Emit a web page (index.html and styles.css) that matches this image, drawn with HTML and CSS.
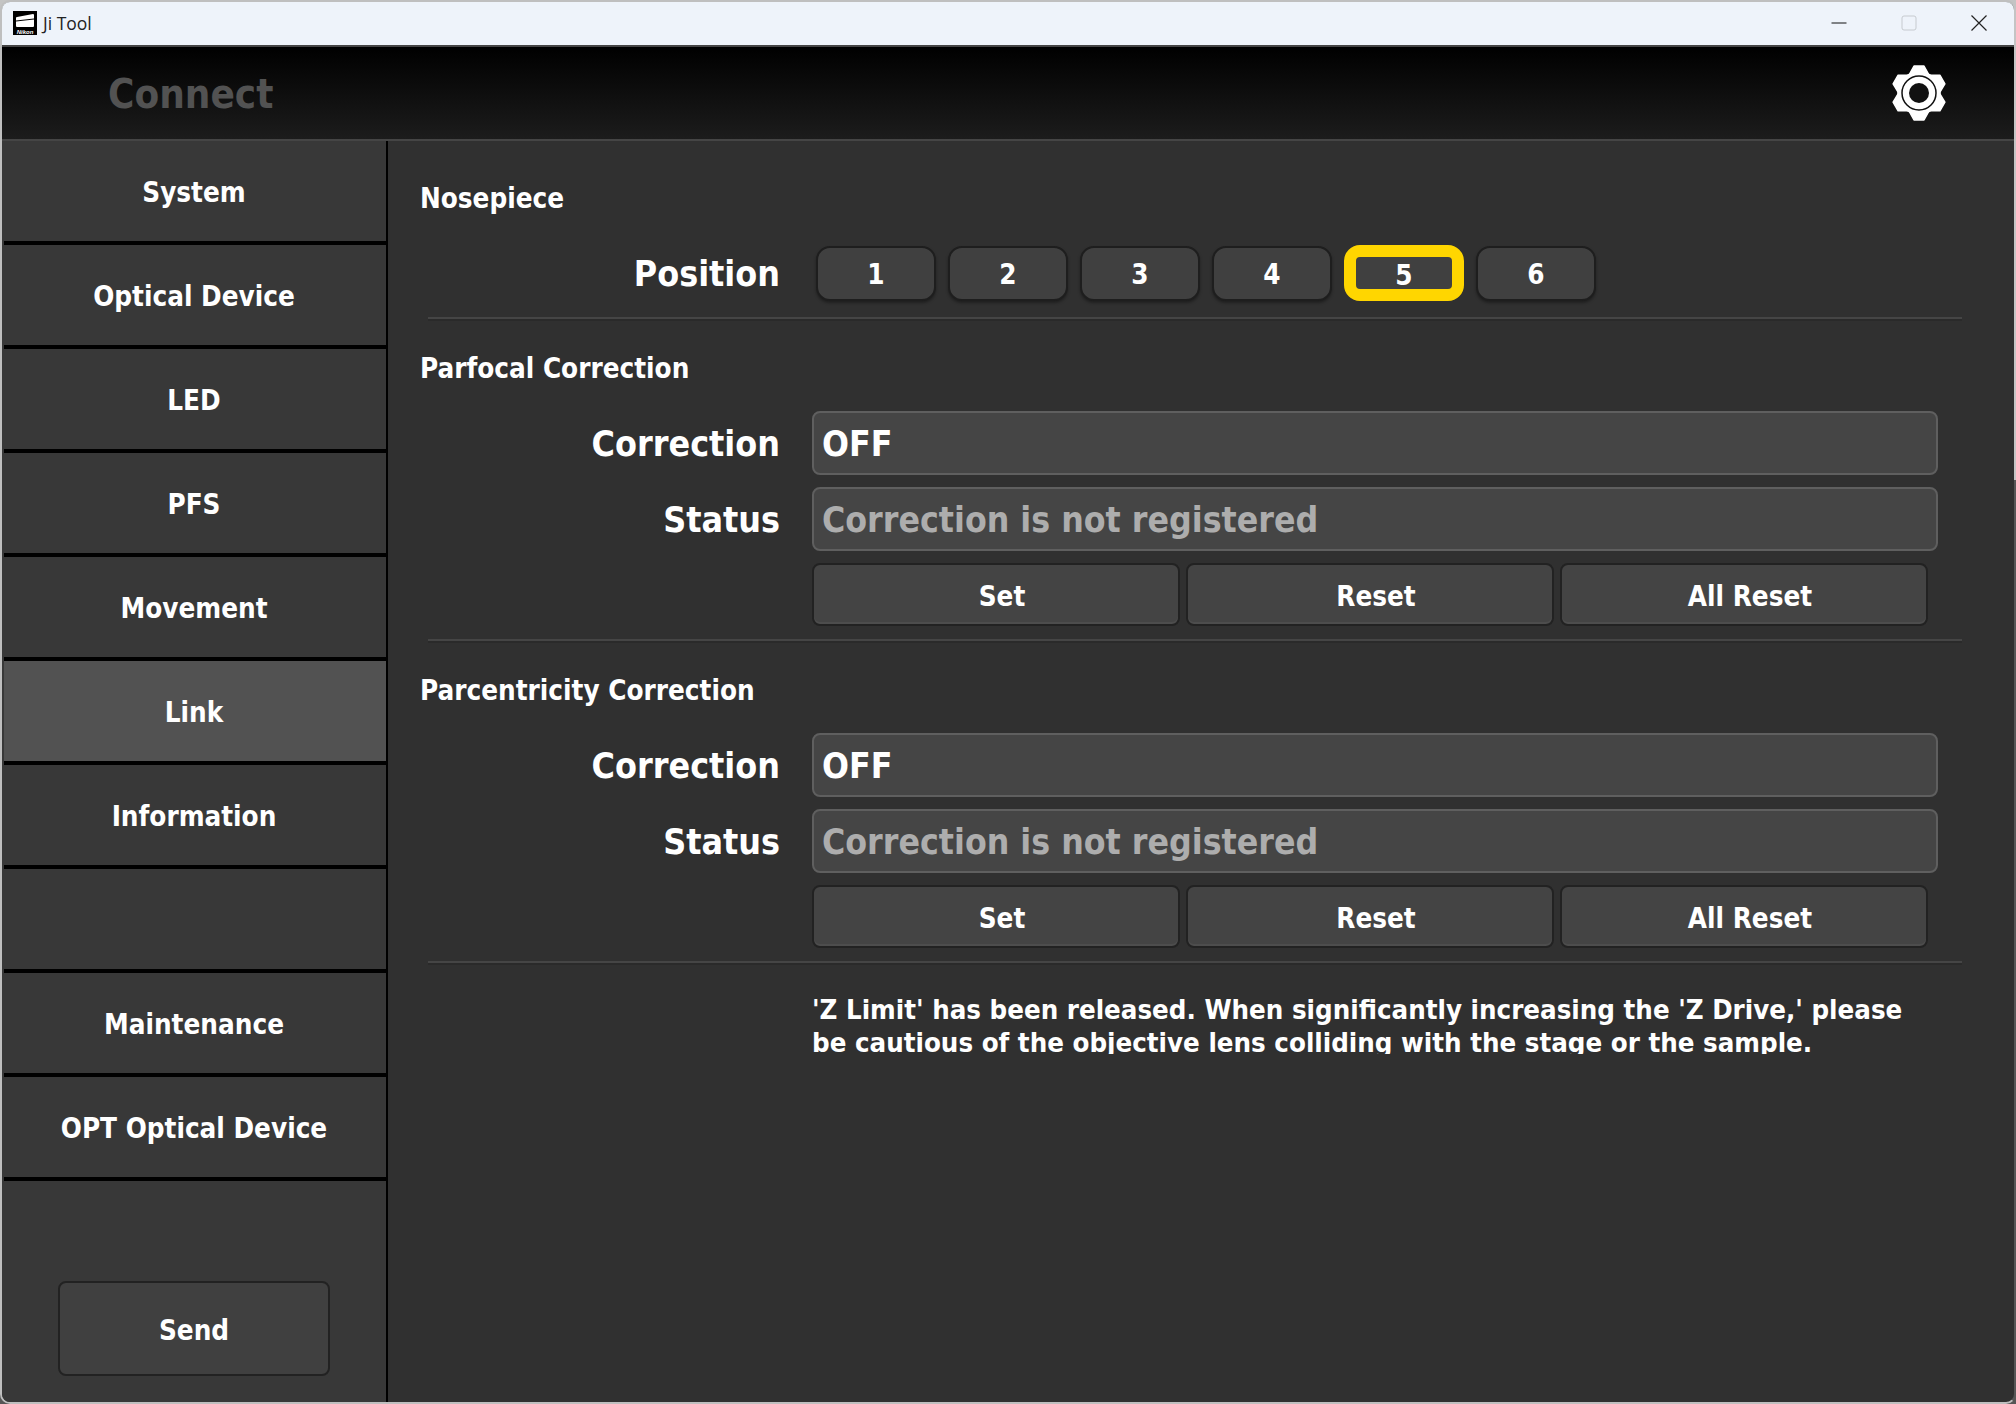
FILE: index.html
```html
<!DOCTYPE html>
<html lang="en">

<head>
    <meta charset="UTF-8">
    <title>Ji Tool</title>
    <link rel="stylesheet" href="styles.css">
</head>

<body>

    <div class="window">
        <div class="titlebar">
            <svg class="app-icon" width="24" height="24" viewBox="0 0 24 24">
                <rect width="24" height="24" fill="#000" />
                <path d="M4 6 L20 3 Q21 3 21 4 L21 15 Q21 16 20 16 L4 16 Q3 16 3 15 L3 7 Q3 6 4 6 Z" fill="#fff" />
                <path d="M3 10 L21 8" stroke="#000" stroke-width="1" />
                <text x="12" y="23" class="app-icon-text" text-anchor="middle">Nikon</text>
            </svg>
            <span class="app-name">Ji Tool</span>
            <div class="win-buttons">
                <svg width="16" height="16" viewBox="0 0 16 16">
                    <path d="M0.5 8 H15.5" stroke="#111" stroke-width="1" />
                </svg>
                <svg width="16" height="16" viewBox="0 0 16 16">
                    <rect x="1" y="1" width="14" height="14" rx="2" fill="none" stroke="#c6cacf" stroke-width="1" />
                </svg>
                <svg width="16" height="16" viewBox="0 0 16 16">
                    <path d="M0.5 0.5 L15.5 15.5 M15.5 0.5 L0.5 15.5" stroke="#222" stroke-width="1.2" />
                </svg>
            </div>
        </div>

        <header class="topbar">
            <span class="connect">Connect</span>
            <svg class="gear" width="56" height="58" viewBox="-28 -29 56 58">
                <g fill="#fff" stroke="#fff" stroke-width="1.5" stroke-linejoin="round">
                    <circle r="21" />
                    <path d="M-10 -18 L-5 -27 L5 -27 L10 -18 Z" />
                    <path d="M-10 -18 L-5 -27 L5 -27 L10 -18 Z" transform="rotate(60)" />
                    <path d="M-10 -18 L-5 -27 L5 -27 L10 -18 Z" transform="rotate(120)" />
                    <path d="M-10 -18 L-5 -27 L5 -27 L10 -18 Z" transform="rotate(180)" />
                    <path d="M-10 -18 L-5 -27 L5 -27 L10 -18 Z" transform="rotate(240)" />
                    <path d="M-10 -18 L-5 -27 L5 -27 L10 -18 Z" transform="rotate(300)" />
                </g>
                <circle r="17" fill="none" stroke="#111" stroke-width="1.5" />
                <circle r="10" fill="#111" />
            </svg>
        </header>

        <div class="content">
            <nav class="sidebar">
                <div class="nav-item">System</div>
                <div class="nav-item">Optical Device</div>
                <div class="nav-item">LED</div>
                <div class="nav-item">PFS</div>
                <div class="nav-item">Movement</div>
                <div class="nav-item active">Link</div>
                <div class="nav-item">Information</div>
                <div class="nav-item"></div>
                <div class="nav-item">Maintenance</div>
                <div class="nav-item">OPT Optical Device</div>
                <button class="send-btn">Send</button>
            </nav>

            <main class="main">
                <section class="section first">
                    <h3>Nosepiece</h3>
                    <div class="row position-row">
                        <span class="row-label">Position</span>
                        <div class="positions">
                            <button class="pos-btn">1</button>
                            <button class="pos-btn">2</button>
                            <button class="pos-btn">3</button>
                            <button class="pos-btn">4</button>
                            <button class="pos-btn selected">5</button>
                            <button class="pos-btn">6</button>
                        </div>
                    </div>
                </section>
                <div class="divider"></div>

                <section class="section">
                    <h3>Parfocal Correction</h3>
                    <div class="row field-row">
                        <span class="row-label">Correction</span>
                        <div class="field">OFF</div>
                    </div>
                    <div class="row field-row">
                        <span class="row-label">Status</span>
                        <div class="field muted">Correction is not registered</div>
                    </div>
                    <div class="actions">
                        <button class="act-btn">Set</button>
                        <button class="act-btn">Reset</button>
                        <button class="act-btn">All Reset</button>
                    </div>
                </section>
                <div class="divider"></div>

                <section class="section">
                    <h3>Parcentricity Correction</h3>
                    <div class="row field-row">
                        <span class="row-label">Correction</span>
                        <div class="field">OFF</div>
                    </div>
                    <div class="row field-row">
                        <span class="row-label">Status</span>
                        <div class="field muted">Correction is not registered</div>
                    </div>
                    <div class="actions">
                        <button class="act-btn">Set</button>
                        <button class="act-btn">Reset</button>
                        <button class="act-btn">All Reset</button>
                    </div>
                </section>
                <div class="divider"></div>

                <p class="notice">'Z Limit' has been released. When significantly increasing the 'Z Drive,' please be cautious of the objective lens colliding with the stage or the sample.</p>
            </main>
        </div>
    </div>

</body>

</html>
```

FILE: styles.css
```css
/* General Styles */
html,
body {
    margin: 0;
    height: 100%;
}

body {
    background: linear-gradient(#c4c4c4 480px, #565656 480px);
    overflow: hidden;
    font-family: "DejaVu Sans", "Liberation Sans", sans-serif;
    font-stretch: condensed;
    font-weight: 700;
    color: #fff;
}

button {
    font: inherit;
    font-stretch: condensed;
    color: #fff;
    padding: 0;
}

.window {
    width: 2016px;
    height: 1404px;
    box-sizing: border-box;
    border: 2px solid #bfbfbf;
    border-right-color: transparent;
    border-radius: 10px;
    background-clip: padding-box;
    overflow: hidden;
    background-color: #303030;
    display: flex;
    flex-direction: column;
}

/* Title Bar */
.titlebar {
    height: 41px;
    flex: none;
    display: flex;
    align-items: center;
    background: #eef3fa;
    border-bottom: 2px solid #444;
    padding: 0 0 2px 11px;
    font-family: "Open Sans", sans-serif;
    font-stretch: normal;
    font-weight: 400;
    color: #222;
}

.app-icon-text {
    font-family: "Liberation Sans", sans-serif;
    font-size: 6px;
    font-style: italic;
    font-weight: 700;
    fill: #fff;
}

.app-name {
    margin-left: 6px;
    font-size: 17.5px;
}

.win-buttons {
    margin-left: auto;
    display: flex;
    gap: 54px;
    padding-right: 27px;
}

/* Header */
.topbar {
    height: 92px;
    flex: none;
    display: flex;
    align-items: center;
    justify-content: space-between;
    background: linear-gradient(#000, #1c1c1c);
    border-bottom: 2px solid #454545;
    padding: 0 67px 0 106px;
}

.connect {
    font-size: 40px;
    padding-top: 2px;
    color: #525252;
}

.content {
    flex: 1;
    display: flex;
    min-height: 0;
}

/* Sidebar */
.sidebar {
    width: 382px;
    flex: none;
    padding-left: 2px;
    background: #383838;
    border-right: 2px solid #000;
}

.nav-item {
    height: 98px;
    padding: 2px 2px 0 0;
    border-bottom: 4px solid #000;
    display: flex;
    align-items: center;
    justify-content: center;
    font-size: 27.6px;
}

.nav-item.active {
    background: #525252;
}

.send-btn {
    display: block;
    width: 272px;
    height: 95px;
    margin: 100px 0 0 54px;
    padding-top: 3px;
    font-size: 27.6px;
    background: #404040;
    border: 2px solid #222;
    border-radius: 8px;
}

/* Main Panel */
.main {
    flex: 1;
    min-width: 0;
}

.section {
    padding: 30px 0 0 32px;
}

.section.first {
    padding-top: 40px;
}

h3 {
    margin: 0 0 26px;
    height: 34px;
    padding-top: 1px;
    box-sizing: border-box;
    line-height: 34px;
    font-size: 27.6px;
}

.first h3 {
    margin-bottom: 30px;
}

.row {
    display: flex;
    align-items: center;
}

.row-label {
    width: 360px;
    flex: none;
    text-align: right;
    font-size: 35.5px;
}

.position-row {
    margin-bottom: 16px;
}

.positions {
    display: flex;
    align-items: center;
    gap: 12px;
    margin-left: 36px;
    height: 56px;
}

.pos-btn {
    width: 120px;
    height: 55px;
    padding-top: 2px;
    font-size: 27.6px;
    background: #404040;
    border: 2px solid #1e1e1e;
    border-radius: 14px;
    box-shadow: 0 2px 3px rgba(0, 0, 0, 0.35);
}

.pos-btn.selected {
    box-sizing: content-box;
    width: 96px;
    height: 30px;
    border: 12px solid #ffd600;
    border-radius: 16px;
    box-shadow: none;
}

.divider {
    width: 1534px;
    height: 2px;
    margin-left: 40px;
    background: #454545;
    border-bottom: 2px solid #2a2a2a;
}

.field-row {
    margin-bottom: 12px;
}

.field {
    width: 1126px;
    height: 64px;
    box-sizing: border-box;
    margin-left: 32px;
    padding: 1px 0 0 8px;
    display: flex;
    align-items: center;
    font-size: 35.3px;
    background: #454545;
    border: 2px solid #5f5f5f;
    border-radius: 8px;
}

.field.muted {
    color: #adadad;
}

.actions {
    display: flex;
    gap: 6px;
    margin: 0 0 13px 392px;
}

.act-btn {
    width: 368px;
    height: 63px;
    padding: 3px 0 0 12px;
    font-size: 27.6px;
    background: #444;
    border: 2px solid #222;
    border-radius: 8px;
    box-shadow: inset 0 -2px 0 #4d4d4d;
}

.notice {
    width: 1100px;
    height: 61px;
    margin: 28px 0 0 424px;
    overflow: hidden;
    line-height: 33px;
    font-size: 27.4px;
}
```
